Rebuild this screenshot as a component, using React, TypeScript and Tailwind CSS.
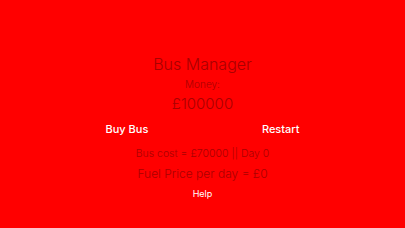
export default function App() {
  return (
    <div
      className="w-[405px] h-[228px] bg-[#ff0000] flex flex-col items-center text-[#a80000] font-light"
      style={{ fontFamily: 'Inter, "Noto Sans", sans-serif' }}
    >
      <div className="mt-[54px] text-[16px] leading-[20px]">Bus Manager</div>
      <div className="mt-[3px] text-[10px] leading-[14px]">Money:</div>
      <div className="mt-[3px] text-[15px] leading-[20px]">£100000</div>
      <div className="mt-[7px] w-[194px] flex justify-between text-white text-[11px] leading-[16px] font-medium">
        <span>Buy Bus</span>
        <span>Restart</span>
      </div>
      <div className="mt-[10px] text-[10.5px] leading-[14px]">Bus cost = £70000 || Day 0</div>
      <div className="mt-[4px] text-[12px] leading-[18px]">Fuel Price per day = £0</div>
      <div className="mt-[5px] text-white text-[9px] leading-[12px] font-normal">Help</div>
    </div>
  )
}
